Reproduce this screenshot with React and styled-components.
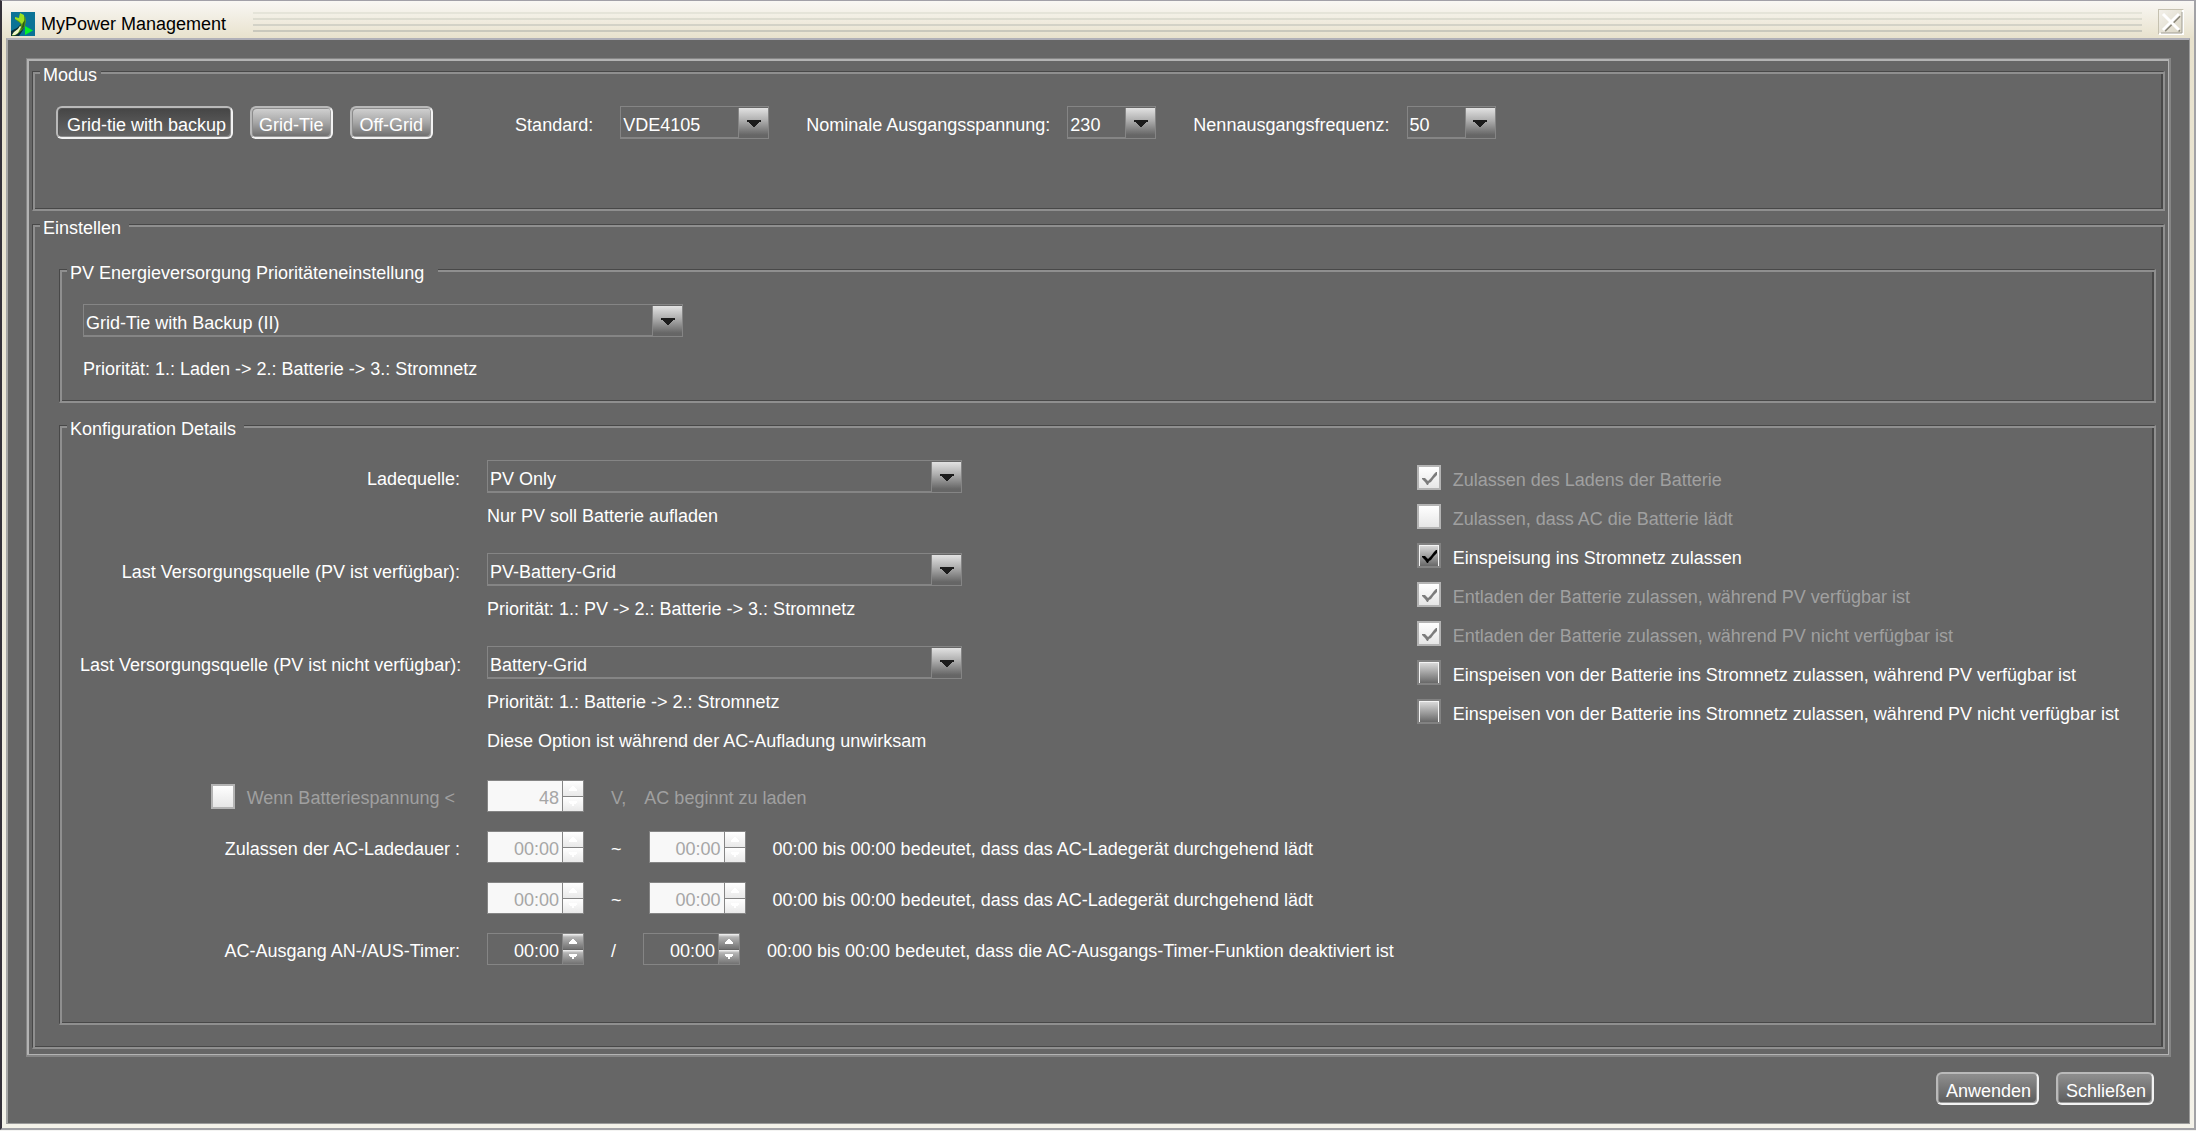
import { useState } from "react";
import styled, { createGlobalStyle, css } from "styled-components";

const MODES = ["Grid-tie with backup", "Grid-Tie", "Off-Grid"];

const PERMISSIONS = [
  { label: "Zulassen des Ladens der Batterie", checked: true, disabled: true },
  { label: "Zulassen, dass AC die Batterie lädt", disabled: true },
  { label: "Einspeisung ins Stromnetz zulassen", checked: true },
  {
    label: "Entladen der Batterie zulassen, während PV verfügbar ist",
    checked: true,
    disabled: true,
  },
  {
    label: "Entladen der Batterie zulassen, während PV nicht verfügbar ist",
    checked: true,
    disabled: true,
  },
  {
    label:
      "Einspeisen von der Batterie ins Stromnetz zulassen, während PV verfügbar ist",
  },
  {
    label:
      "Einspeisen von der Batterie ins Stromnetz zulassen, während PV nicht verfügbar ist",
  },
];

export default function App() {
  const [mode, setMode] = useState(MODES[0]);

  return (
    <>
      <GlobalStyle />
      <Window>
        <TitleBar>
          <AppIcon />
          <Title>MyPower Management</Title>
          <Grip>
            <GripLine $color="#e5e4d9" />
            <GripLine $color="#dddcd0" />
            <GripLine $color="#d3d2c7" />
            <GripLine $color="#c9c8bc" />
          </Grip>
          <CloseButton type="button" aria-label="Fenster schließen">
            <CloseIcon />
          </CloseButton>
        </TitleBar>

        <Content>
          <Panel>
            <Group>
              <Legend $gap={4}>Modus</Legend>
              <ModeBar>
                <ButtonRow>
                  {MODES.map((name) => (
                    <ModeButton
                      key={name}
                      type="button"
                      aria-pressed={mode === name}
                      $pressed={mode === name}
                      onClick={() => setMode(name)}
                    >
                      {name}
                    </ModeButton>
                  ))}
                </ButtonRow>
                <ModeFields>
                  <ModeField $gap={27}>
                    <Text as="label" htmlFor="standard">
                      Standard:
                    </Text>
                    <Dropdown id="standard" width={149} value="VDE4105" />
                  </ModeField>
                  <ModeField $gap={17}>
                    <Text as="label" htmlFor="voltage">
                      Nominale Ausgangsspannung:
                    </Text>
                    <Dropdown id="voltage" width={89} value="230" />
                  </ModeField>
                  <ModeField $gap={17}>
                    <Text as="label" htmlFor="frequency">
                      Nennausgangsfrequenz:
                    </Text>
                    <Dropdown id="frequency" width={89} value="50" />
                  </ModeField>
                </ModeFields>
              </ModeBar>
            </Group>

            <Group>
              <Legend $gap={8}>Einstellen</Legend>
              <Settings>
                <Group>
                  <Legend $gap={14}>
                    PV Energieversorgung Prioritäteneinstellung
                  </Legend>
                  <Priority>
                    <Dropdown
                      id="priority"
                      label="PV Energieversorgung Priorität"
                      width={600}
                      value="Grid-Tie with Backup (II)"
                    />
                    <Note>
                      Priorität: 1.: Laden -&gt; 2.: Batterie -&gt; 3.:
                      Stromnetz
                    </Note>
                  </Priority>
                </Group>

                <Group>
                  <Legend $gap={8}>Konfiguration Details</Legend>
                  <Details>
                    <Form>
                      <SourceRow
                        id="charge-source"
                        label="Ladequelle:"
                        value="PV Only"
                        notes={["Nur PV soll Batterie aufladen"]}
                      />
                      <SourceRow
                        id="load-source-pv"
                        label="Last Versorgungsquelle (PV ist verfügbar):"
                        value="PV-Battery-Grid"
                        notes={[
                          "Priorität: 1.: PV -> 2.: Batterie -> 3.: Stromnetz",
                        ]}
                      />
                      <SourceRow
                        id="load-source-no-pv"
                        label="Last Versorgungsquelle (PV ist nicht verfügbar):"
                        value="Battery-Grid"
                        notes={[
                          "Priorität: 1.: Batterie -> 2.: Stromnetz",
                          "Diese Option ist während der AC-Aufladung unwirksam",
                        ]}
                      />

                      <TimeRows>
                        <FormRow>
                          <VoltageLabel>
                            <Checkbox id="battery-low" disabled />
                            <Text as="label" htmlFor="battery-low" $disabled>
                              Wenn Batteriespannung &lt;
                            </Text>
                          </VoltageLabel>
                          <Controls>
                            <Spinner label="Batteriespannung" value="48" disabled />
                            <Unit>
                              <Text $disabled>V,</Text>
                              <Text $disabled>AC beginnt zu laden</Text>
                            </Unit>
                          </Controls>
                        </FormRow>
                        <FormRow>
                          <TimeLabel>Zulassen der AC-Ladedauer :</TimeLabel>
                          <Controls>
                            <Spinner label="Ladedauer 1 von" value="00:00" disabled />
                            <Text>~</Text>
                            <Spinner label="Ladedauer 1 bis" value="00:00" disabled />
                            <Text>
                              00:00 bis 00:00 bedeutet, dass das AC-Ladegerät
                              durchgehend lädt
                            </Text>
                          </Controls>
                        </FormRow>
                        <FormRow>
                          <span />
                          <Controls>
                            <Spinner label="Ladedauer 2 von" value="00:00" disabled />
                            <Text>~</Text>
                            <Spinner label="Ladedauer 2 bis" value="00:00" disabled />
                            <Text>
                              00:00 bis 00:00 bedeutet, dass das AC-Ladegerät
                              durchgehend lädt
                            </Text>
                          </Controls>
                        </FormRow>
                        <FormRow>
                          <TimeLabel>AC-Ausgang AN-/AUS-Timer:</TimeLabel>
                          <Controls>
                            <Spinner label="Timer an" value="00:00" />
                            <Text>/</Text>
                            <Spinner label="Timer aus" value="00:00" />
                            <Text>
                              00:00 bis 00:00 bedeutet, dass die
                              AC-Ausgangs-Timer-Funktion deaktiviert ist
                            </Text>
                          </Controls>
                        </FormRow>
                      </TimeRows>
                    </Form>

                    <Permissions>
                      {PERMISSIONS.map((item, index) => (
                        <CheckRow key={item.label}>
                          <Checkbox
                            id={`permission-${index}`}
                            checked={item.checked}
                            disabled={item.disabled}
                          />
                          <Text
                            as="label"
                            htmlFor={`permission-${index}`}
                            $disabled={item.disabled}
                          >
                            {item.label}
                          </Text>
                        </CheckRow>
                      ))}
                    </Permissions>
                  </Details>
                </Group>
              </Settings>
            </Group>
          </Panel>

          <Footer>
            <ActionButton type="button">Anwenden</ActionButton>
            <ActionButton type="button">Schließen</ActionButton>
          </Footer>
        </Content>
      </Window>
    </>
  );
}

function SourceRow({ id, label, value, notes }) {
  return (
    <FormRow>
      <RowLabel as="label" htmlFor={id}>
        {label}
      </RowLabel>
      <SourceField>
        <Dropdown id={id} width={475} value={value} />
        <NoteList>
          {notes.map((note) => (
            <Note key={note}>{note}</Note>
          ))}
        </NoteList>
      </SourceField>
    </FormRow>
  );
}

function Dropdown({ id, label, width, value }) {
  return (
    <SelectBox $width={width}>
      <StyledSelect id={id} aria-label={label} defaultValue={value}>
        <option>{value}</option>
      </StyledSelect>
      <SelectArrow>
        <svg width="14" height="7" viewBox="0 0 14 7" shapeRendering="crispEdges">
          <path
            d="M0 0h14v2h-2v1h-1v1h-1v1h-1v1h-1v1h-2v-1h-1v-1h-1v-1h-1v-1h-1v-1h-2z"
            fill="#1c1c1c"
          />
        </svg>
      </SelectArrow>
    </SelectBox>
  );
}

function Checkbox({ id, checked = false, disabled = false }) {
  const [isChecked, setIsChecked] = useState(checked);

  return (
    <CheckBoxWrap>
      <CheckInput
        type="checkbox"
        id={id}
        checked={isChecked}
        disabled={disabled}
        onChange={() => setIsChecked(!isChecked)}
      />
      {isChecked && (
        <CheckMark viewBox="0 0 24 25">
          <path
            d="M5 13h3l3 3 3-3 3-4 2-2h1v3l-3 3-3 4-2 1-1 2h-1l-2-3-3-3z"
            fill={disabled ? "#7c7c7c" : "#000"}
          />
        </CheckMark>
      )}
    </CheckBoxWrap>
  );
}

function Spinner({ label, value, disabled }) {
  return (
    <SpinnerBox $disabled={disabled}>
      <SpinnerInput
        type="text"
        aria-label={label}
        defaultValue={value}
        disabled={disabled}
      />
      <SpinnerButtons $disabled={disabled}>
        <SpinnerButton
          type="button"
          aria-label={`${label} erhöhen`}
          disabled={disabled}
        >
          <svg width="8" height="5" viewBox="0 0 8 5" shapeRendering="crispEdges">
            <path d="M3 0h2v1h1v1h1v1h1v2h-8v-2h1v-1h1v-1h1z" fill="#fff" />
          </svg>
        </SpinnerButton>
        <SpinnerButton
          type="button"
          aria-label={`${label} verringern`}
          disabled={disabled}
        >
          <svg width="8" height="5" viewBox="0 0 8 5" shapeRendering="crispEdges">
            <path d="M0 0h8v2h-1v1h-2v2h-2v-2h-2v-1h-1z" fill="#fff" />
          </svg>
        </SpinnerButton>
      </SpinnerButtons>
    </SpinnerBox>
  );
}

function AppIcon() {
  return (
    <svg width="24" height="24" viewBox="0 0 24 24">
      <rect width="24" height="24" fill="#0b7396" />
      <path d="M0 24v-5l6-3 5-5 3 1-2 6-4 6z" fill="#0a2c38" />
      <path
        d="M9 2l3 1 1 2 1-1 1 5-1 5-3 4-6 5-4 1 1-3 5-4 3-4-1-2-4-3-1-2 4 1z"
        fill="#5a9a16"
      />
      <path d="M9 1l4 2v6l-2 3-3-3-4-2v-2l4 1z" fill="#9be022" />
      <path d="M1 23l2-3 4-3 2-3 1 1-3 6-3 2z" fill="#f0f3c8" />
      <path d="M12 11l2-3-1 7-3 3z" fill="#2c5c12" />
      <path d="M14 14l8 4.500-8 4.500z" fill="#08f028" />
    </svg>
  );
}

function CloseIcon() {
  return (
    <svg width="26" height="26" viewBox="0 0 26 26">
      <path d="M0 25V0h25" fill="none" stroke="#c6c1b0" strokeWidth="2" />
      <path d="M1 25h24V1" fill="none" stroke="#fff" strokeWidth="2" />
      <path d="M3 24h21V3" fill="none" stroke="#a09d92" strokeWidth="1" />
      <path d="M7 22L22 7M20 21l2 1" stroke="#8d8a7c" strokeWidth="2" />
      <path d="M5 5l16 16M21 5L5 21" stroke="#fff" strokeWidth="3" />
    </svg>
  );
}

const GlobalStyle = createGlobalStyle`
  * {
    box-sizing: border-box;
  }

  body {
    margin: 0;
    background: #f4f4f2;
    color: white;
    font-family: "Liberation Sans", Arial, sans-serif;
    font-size: 18px;
    line-height: 20px;
  }

  button,
  input,
  select {
    margin: 0;
    font: inherit;
    color: inherit;
  }
`;

const Window = styled.main`
  display: flex;
  flex-direction: column;
  min-height: calc(100vh - 1px);
  padding: 0 4px 4px;
  border: 2px solid #a2a2a6;
  border-top: 1px solid #a2a0a8;
  border-left-color: #35313a;
  background: linear-gradient(#f9f7f4, #e8e2cd 37px, #f4f2e9);
`;

const TitleBar = styled.header`
  display: flex;
  align-items: center;
  height: 37px;
  padding: 9px 6px 0 5px;
`;

const Title = styled.h1`
  margin: 0 27px 0 6px;
  color: black;
  font-size: 18px;
  font-weight: normal;
  line-height: 20px;
`;

const Grip = styled.div`
  display: flex;
  flex-direction: column;
  flex: 1;
  gap: 4px;
  margin-right: 16px;
  padding-bottom: 4px;
`;

const GripLine = styled.div`
  height: 2px;
  background: ${({ $color }) => $color};
`;

const CloseButton = styled.button`
  display: flex;
  padding: 0;
  margin-bottom: 4px;
  border: none;
  background: linear-gradient(135deg, #f4f2ec, #d9d4c2);
`;

const Content = styled.div`
  display: flex;
  flex-direction: column;
  flex: 1;
  padding: 18px;
  border: 1px solid #9b9b9b;
  border-top: 2px solid #b0b0b8;
  border-left: 2px solid #a6a6a6;
  background: #666666;
`;

const Panel = styled.div`
  display: flex;
  flex-direction: column;
  gap: 1px;
  padding: 0 4px 6px 5px;
  border: 1px solid #858585;
  border-width: 1px 2px 2px 1px;
  box-shadow: inset 2px 2px 0 #b3b3b3, inset -1px -1px 0 #b3b3b3;
`;

const Group = styled.fieldset`
  min-width: 0;
  margin: 0;
  padding: 0 7px;
  border: 1px solid #484848;
  border-right: 2px solid #8f8f8f;
  border-bottom: 2px solid #8f8f8f;
  box-shadow: inset 2px 2px 0 #8f8f8f, inset -2px -1px 0 #484848;
`;

/* the transparent top border keeps the text below the middle of the frame line */
const Legend = styled.legend`
  padding: 0 ${({ $gap }) => $gap}px 0 3px;
  border-top: 7px solid transparent;
  background: #666666;
  background-clip: padding-box;
  line-height: 18px;
`;

const ModeBar = styled.div`
  display: flex;
  flex-wrap: wrap;
  align-items: center;
  gap: 17px 82px;
  padding: 22px 16px 70px;
`;

const ButtonRow = styled.div`
  display: flex;
  gap: 17px;
`;

const ModeFields = styled.div`
  display: flex;
  flex-wrap: wrap;
  gap: 17px 37px;
`;

const ModeField = styled.div`
  display: flex;
  align-items: center;
  gap: ${({ $gap }) => $gap}px;
`;

const BaseButton = styled.button`
  height: 33px;
  padding: 4px 7px 0;
  border: 2px solid;
  border-color: #b9b9b9 #f2f2f2 #f2f2f2 #b9b9b9;
  border-radius: 6px;
  box-shadow: inset -1px -1px 0 #9c9c9c, inset 1px 1px 0 #8c8c8c;
`;

const ModeButton = styled(BaseButton)`
  background: linear-gradient(#d2d2d2, #a6a6a6 50%, #6c6c6c);

  ${({ $pressed }) =>
    $pressed
      ? css`
          padding: 5px 5px 0 9px;
          background: linear-gradient(#454545, #666666);
          box-shadow: inset -1px -1px 0 #8c8c8c, inset 1px 1px 0 #555555;
        `
      : css`
          padding-right: 8px;
        `}
`;

const ActionButton = styled(BaseButton)`
  padding-top: 5px;
  padding-left: 8px;
  padding-right: 6px;
  background: linear-gradient(#8f8f8f, #5c5c5c);
`;

const Text = styled.span`
  padding-top: 4px;
  color: ${({ $disabled }) => ($disabled ? "#a0a0a0" : "white")};
  white-space: nowrap;
`;

const Settings = styled.div`
  display: flex;
  flex-direction: column;
  gap: 10px;
  padding: 20px 0 22px 19px;
`;

const Priority = styled.div`
  display: flex;
  flex-direction: column;
  gap: 22px;
  padding: 22px 16px;
`;

const Note = styled.p`
  margin: 0;
`;

const Details = styled.div`
  display: flex;
  justify-content: space-between;
  gap: 20px;
  padding: 22px 28px 58px 13px;
`;

const Form = styled.div`
  display: flex;
  flex-direction: column;
  gap: 27px;
`;

const FormRow = styled.div`
  display: grid;
  grid-template-columns: 380px auto;
  justify-content: start;
  column-gap: 27px;
`;

const RowLabel = styled.span`
  padding-top: 9px;
  text-align: right;
  white-space: nowrap;
`;

const TimeLabel = styled(RowLabel)`
  padding-top: 8px;
`;

const SourceField = styled.div`
  display: flex;
  flex-direction: column;
  gap: 13px;
`;

const NoteList = styled.div`
  display: flex;
  flex-direction: column;
  gap: 19px;
`;

const TimeRows = styled.div`
  display: flex;
  flex-direction: column;
  gap: 19px;
  padding-top: 2px;
`;

const VoltageLabel = styled.div`
  display: flex;
  align-items: center;
  justify-content: flex-end;
  gap: 12px;
  padding-right: 5px;
`;

const Controls = styled.div`
  display: flex;
  align-items: center;
  gap: 27px;
`;

const Unit = styled.div`
  display: flex;
  gap: 18px;
`;

const Permissions = styled.div`
  display: flex;
  flex-direction: column;
  gap: 14px;
  padding-top: 5px;
`;

const CheckRow = styled.div`
  display: flex;
  align-items: center;
  gap: 12px;
  height: 25px;
`;

const SelectBox = styled.div`
  position: relative;
  width: ${({ $width }) => $width}px;
  height: 33px;
`;

const StyledSelect = styled.select`
  appearance: none;
  display: block;
  width: 100%;
  height: 100%;
  padding: 5px 32px 0 2px;
  border: 1px solid #858585;
  border-radius: 0;
  box-shadow: inset 0 -1px 0 #858585;
  background: #666666;
`;

const SelectArrow = styled.span`
  position: absolute;
  top: 2px;
  right: 1px;
  bottom: 1px;
  display: flex;
  align-items: center;
  justify-content: center;
  width: 30px;
  padding-top: 1px;
  border-left: 1px solid #858585;
  background: linear-gradient(#e2e2e2, #b0b0b0 40%, #666666 90%);
  pointer-events: none;
`;

const CheckBoxWrap = styled.span`
  position: relative;
  display: flex;
  flex: none;
  width: 24px;
  height: 25px;
`;

const CheckInput = styled.input`
  appearance: none;
  width: 100%;
  height: 100%;
  border: 2px solid #828282;
  background: linear-gradient(#dedede, #686868);
  box-shadow: inset 1px 1px 0 #f4f4f4, inset -1px 0 0 #f4f4f4;

  &:disabled {
    border-color: #b4b4b4;
    background: linear-gradient(#ffffff, #e6e6e6);
    box-shadow: none;
  }
`;

const CheckMark = styled.svg`
  position: absolute;
  inset: 0;
  pointer-events: none;
`;

const SpinnerBox = styled.span`
  display: flex;
  width: 97px;
  height: 32px;
  border: 1px solid #858585;
  background: ${({ $disabled }) => ($disabled ? "#f8f8f8" : "#666666")};
  color: ${({ $disabled }) => ($disabled ? "#a6a6a6" : "white")};
`;

const SpinnerInput = styled.input`
  flex: 1;
  min-width: 0;
  padding: 4px 3px 0 0;
  border: none;
  background: transparent;
  text-align: right;
`;

const SpinnerButtons = styled.span`
  display: grid;
  grid-template-rows: 1fr 1fr;
  gap: 1px;
  width: 21px;
  border-left: 1px solid #858585;
  background: ${({ $disabled }) => ($disabled ? "#858585" : "#666666")};
`;

const SpinnerButton = styled.button`
  display: flex;
  align-items: center;
  justify-content: center;
  min-height: 0;
  padding: 0;
  border: none;
  background: linear-gradient(#f6f6f6, #b4b4b4 20%, #727272);

  &:disabled {
    background: linear-gradient(#ffffff, #e9e9e9);
  }
`;

const Footer = styled.footer`
  display: flex;
  justify-content: flex-end;
  gap: 17px;
  padding: 15px 17px 0;
`;
